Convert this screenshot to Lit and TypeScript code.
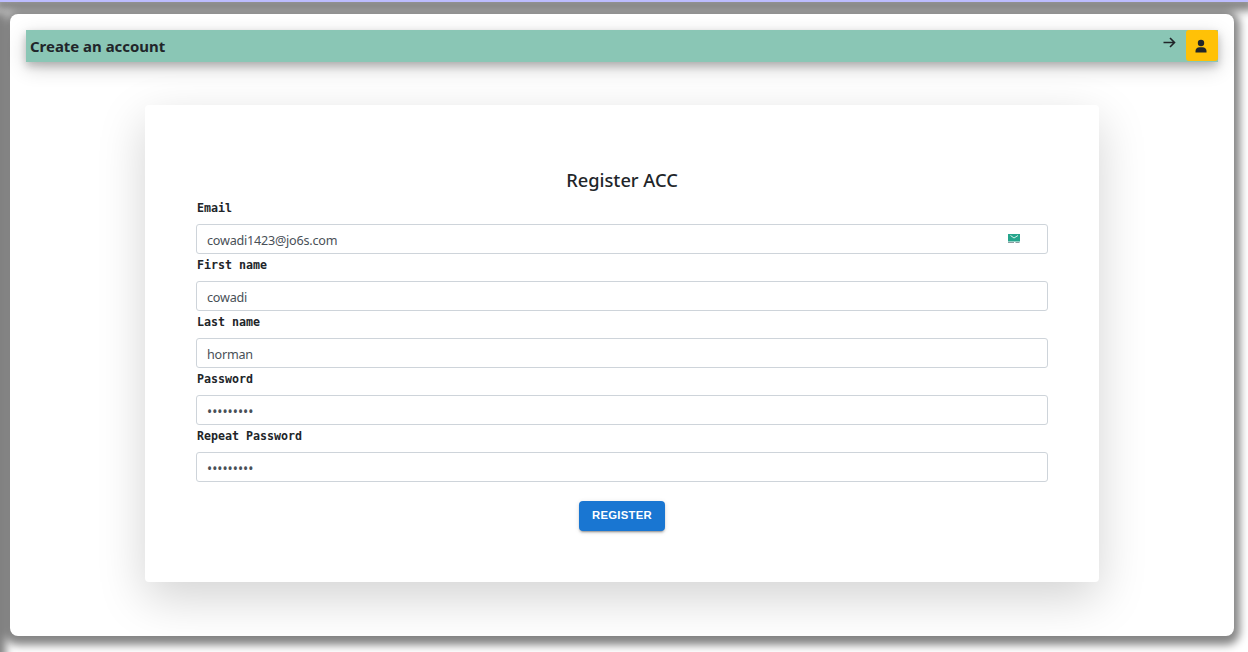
import { LitElement, html, css } from "lit";
import { customElement } from "lit/decorators.js";

interface Field { label: string; value: string; type: string; badge?: boolean; }

const FIELDS: Field[] = [
  { label: "Email", value: "cowadi1423@jo6s.com", type: "text", badge: true },
  { label: "First name", value: "cowadi", type: "text" },
  { label: "Last name", value: "horman", type: "text" },
  { label: "Password", value: "•••••••••", type: "password" },
  { label: "Repeat Password", value: "•••••••••", type: "password" },
];

@customElement("app-root")
export class AppRoot extends LitElement {
  static styles = css`
    :host { display: block; height: 652px; overflow: hidden; background: #fff; color: #212529; font-family: "Noto Sans", sans-serif; }
    * { box-sizing: border-box; }
    .page { height: 652px; display: flex; flex-direction: column; }
    .strip { height: 2px; flex: none; background: #bdbdff; }
    .strip, .edge, .panel { box-shadow: 0 3px 8px 6px #858585; }
    .row { display: flex; flex: 1; padding-top: 12px; }
    .edge { flex: none; width: 20px; margin: 0 0 -20px -20px; }
    .panel { flex: none; width: 1224px; height: 622px; margin-left: 10px; padding: 16px; border-radius: 8px; background: #fff; box-shadow: 0 3px 8px 6px rgba(0,0,0,.48); }
    .bar { height: 32px; display: flex; justify-content: space-between; background: #8ac6b5; box-shadow: 0 4px 8px rgba(0,0,0,.2), 0 6px 20px rgba(0,0,0,.19); }
    .title { margin: 0; padding-left: 4px; font-size: 14.95px; line-height: 33px; font-weight: 700; white-space: nowrap; }
    .tools { display: flex; }
    .arrow { width: 16px; height: 16px; margin: 5px 8px 0 0; }
    .user { width: 32px; height: 31px; border-radius: 3px; background: #ffc107; display: grid; place-items: center; }
    .user svg { margin: 1px 2px 0 0; }
    svg { display: block; }
    .card { width: 954px; height: 477px; margin: 43px 0 0 119px; padding: 62px 51px 0; border-radius: 4px; background: #fff; box-shadow: 0 16px 48px rgba(0,0,0,.175); display: flex; flex-direction: column; }
    .heading { margin: 0; height: 27px; line-height: 26px; font-size: 18.3px; font-weight: 500; text-align: center; }
    .field { height: 57px; padding-top: 2px; }
    .label { height: 28px; padding-left: 1px; font: 700 11.63px/24px "DejaVu Sans Mono", monospace; }
    .input { height: 30px; border: 1px solid #ced4da; border-radius: 3px; padding: 2px 27px 0 10px; display: flex; align-items: center; justify-content: space-between; font-size: 12.6px; letter-spacing: -.22px; color: #495057; }
    .input svg { margin-bottom: 3px; }
    .password { font-size: 13.7px; letter-spacing: 0; }
    .register { align-self: center; width: 86px; height: 30px; margin-top: 22px; border: 0; border-radius: 4px; background: #1976d2; color: #fff; font: 700 11.3px/28px "Liberation Sans", sans-serif; letter-spacing: .3px; padding: 0 0 2px; box-shadow: 0 3px 1px -2px rgba(0,0,0,.2), 0 2px 2px rgba(0,0,0,.14), 0 1px 5px rgba(0,0,0,.12); }
  `;

  private field(f: Field) {
    return html`<div class="field">
      <div class="label">${f.label}</div>
      <div class="input ${f.type}"><span class="value">${f.value}</span>${f.badge
        ? html`<svg width="12" height="12" viewBox="0 0 12 12"><path fill="#25a58c" d="M0 1h12v7.500H0z"/><path fill="none" stroke="#d5f0e8" d="M2.500 2.500 6 5l4-2.500"/><path stroke="#8b9ba1" d="M0 9.500h6M7.500 9.500h4"/></svg>`
        : ""}</div>
    </div>`;
  }

  render() {
    return html`<div class="page">
      <div class="strip"></div>
      <div class="row">
        <div class="edge"></div>
        <main class="panel">
          <header class="bar">
            <h1 class="title">Create an account</h1>
            <div class="tools">
              <svg class="arrow" viewBox="0 0 16 16"><path d="M1.500 7.500h11M8 3l4.500 4.500L8 12" fill="none" stroke="#212529" stroke-width="1.600"/></svg>
              <div class="user"><svg width="16" height="16" viewBox="0 0 16 16" fill="#212529"><circle cx="8" cy="5" r="3.2"/><path d="M2.500 14.500V13C2.500 10.800 4.300 9.300 6.500 9.300H9.500C11.700 9.300 13.500 10.800 13.500 13V14.500Z"/></svg></div>
            </div>
          </header>
          <section class="card">
            <h2 class="heading">Register ACC</h2>
            ${FIELDS.map((f) => this.field(f))}
            <button class="register">REGISTER</button>
          </section>
        </main>
      </div>
    </div>`;
  }
}
